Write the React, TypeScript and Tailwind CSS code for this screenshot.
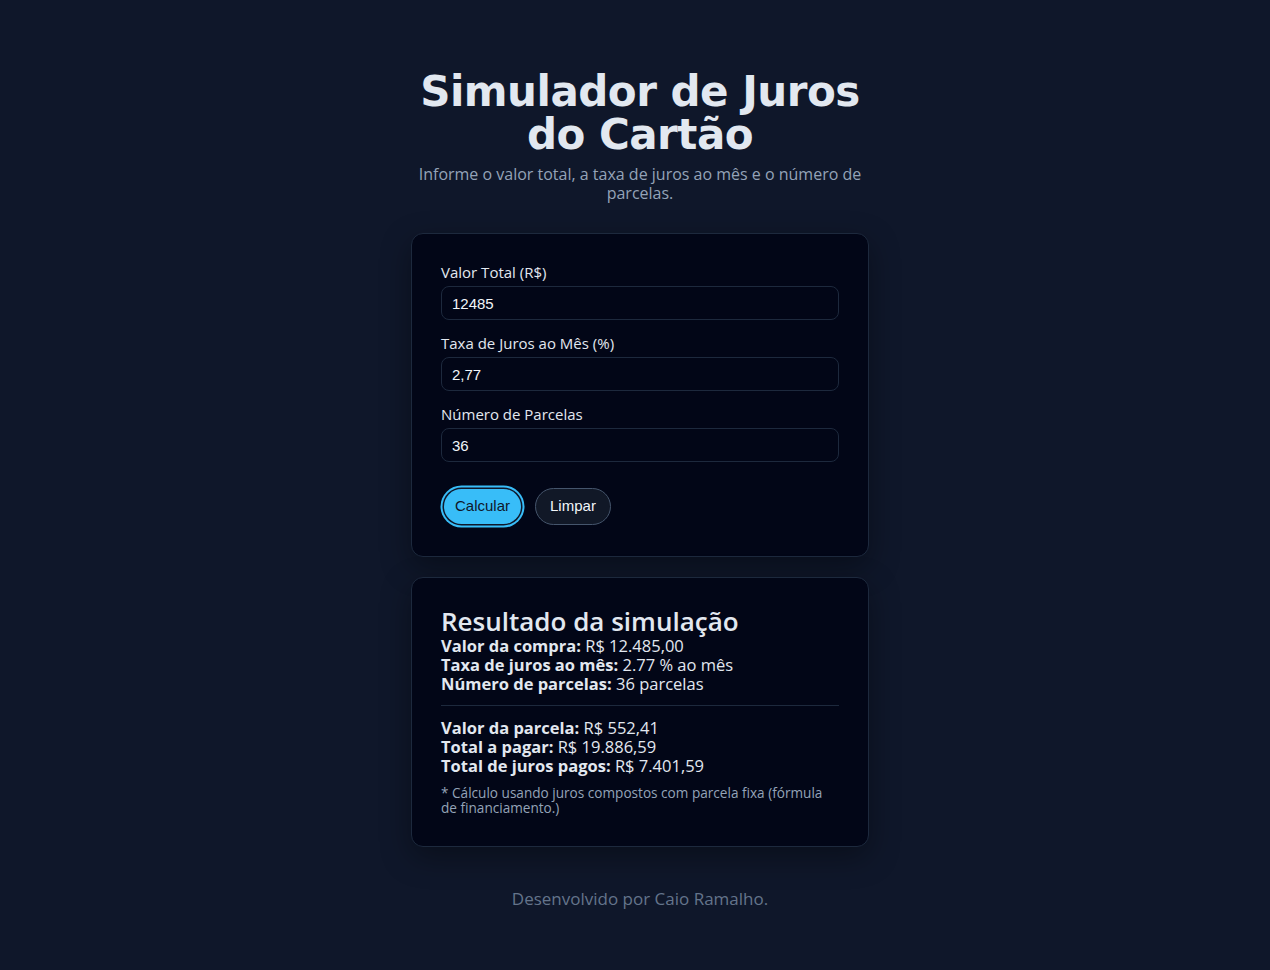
import React from "react";

const body = "font-['Open_Sans','Noto_Sans',sans-serif]";

function Field({ label, value }: { label: string; value: string }) {
  return (
    <div className="flex flex-col">
      <label className="text-[15px] leading-[18px] text-slate-200 mb-[5px]">{label}</label>
      <input
        defaultValue={value}
        className="h-[34px] w-full rounded-lg border border-slate-800 bg-[#020617] px-[10px] text-[15px] text-slate-100 font-['Liberation_Sans',Arial,sans-serif] outline-none"
      />
    </div>
  );
}

function Row({ k, v }: { k: string; v: string }) {
  return (
    <p className="text-[16.5px] leading-[19px] text-slate-200">
      <strong className="font-bold">{k}</strong> {v}
    </p>
  );
}

export default function App() {
  return (
    <div className={`min-h-[970px] bg-[#0f172a] ${body} flex flex-col items-center pt-[70px] pl-[10px]`}>
      <h1 className="text-center text-[42px] leading-[43px] font-bold text-slate-200 font-['DejaVu_Sans',sans-serif] tracking-[-0.5px] w-[470px]">
        Simulador de Juros do Cartão
      </h1>
      <p className="mt-[9px] w-[460px] text-center text-[16px] leading-[19px] text-[#94a3b8]">
        Informe o valor total, a taxa de juros ao mês e o número de parcelas.
      </p>

      <div className="mt-[30px] w-[458px] rounded-xl border border-slate-800 bg-[#020617] px-[29px] pt-[29px] pb-[29px] shadow-[0_10px_30px_rgba(0,0,0,0.35)]">
        <div className="flex flex-col gap-[14px]">
          <Field label="Valor Total (R$)" value="12485" />
          <Field label="Taxa de Juros ao Mês (%)" value="2,77" />
          <Field label="Número de Parcelas" value="36" />
        </div>
        <div className="mt-[24px] flex items-center gap-[11px] font-['Liberation_Sans',Arial,sans-serif]">
          <button className="m-[3px] h-[35px] rounded-full bg-[#38bdf8] px-[11px] text-[15px] text-[#0f172a] ring-2 ring-[#38bdf8] ring-offset-[1.5px] ring-offset-[#0f172a]">
            Calcular
          </button>
          <button className="h-[37px] rounded-full border border-slate-600 bg-[#111827] px-[14px] text-[15px] text-slate-100">
            Limpar
          </button>
        </div>
      </div>

      <div className="mt-[20px] w-[458px] rounded-xl border border-slate-800 bg-[#020617] px-[29px] pt-[28px] pb-[31px] shadow-[0_10px_30px_rgba(0,0,0,0.35)]">
        <h2 className="text-[26px] leading-[30px] font-semibold text-slate-200">Resultado da simulação</h2>
        <div className="flex flex-col">
          <Row k="Valor da compra:" v="R$ 12.485,00" />
          <Row k="Taxa de juros ao mês:" v="2.77 % ao mês" />
          <Row k="Número de parcelas:" v="36 parcelas" />
        </div>
        <hr className="my-[12px] border-slate-800" />
        <div className="flex flex-col">
          <Row k="Valor da parcela:" v="R$ 552,41" />
          <Row k="Total a pagar:" v="R$ 19.886,59" />
          <Row k="Total de juros pagos:" v="R$ 7.401,59" />
        </div>
        <p className="mt-[10px] max-w-[390px] text-[13.6px] leading-[15px] text-[#94a3b8]">
          * Cálculo usando juros compostos com parcela fixa (fórmula de financiamento.)
        </p>
      </div>

      <p className="mt-[42px] text-[17px] leading-[19px] text-[#64748b]">Desenvolvido por Caio Ramalho.</p>
    </div>
  );
}
